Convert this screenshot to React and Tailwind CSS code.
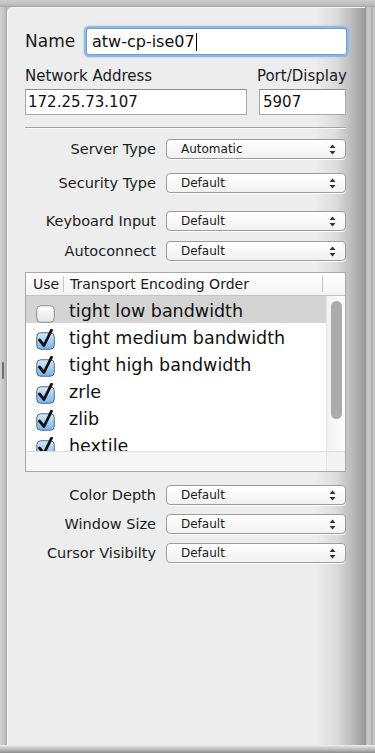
import React from "react";

const FONT = { fontFamily: '"DejaVu Sans", "Noto Sans", sans-serif' };

function Arrows() {
  return (
    <svg width="7" height="11" viewBox="0 0 7 11" className="shrink-0">
      <path d="M3.5 0.5 L6.5 4 L0.5 4 Z" fill="#333" />
      <path d="M3.5 10.5 L6.5 7 L0.5 7 Z" fill="#333" />
    </svg>
  );
}

function Select({ value }) {
  return (
    <div className="flex-1 h-[20px] rounded-[4px] border border-[#9d9d9d] bg-[linear-gradient(#ffffff,#f1f1f1)] shadow-[0_1px_0_#ffffff] flex items-center pl-[14px] pr-[9px]">
      <span className="flex-1 text-[12px] text-[#1a1a1a] leading-none">{value}</span>
      <Arrows />
    </div>
  );
}

function SelectRow({ label, value, mt }) {
  return (
    <div className={`flex items-center h-[20px] ${mt}`}>
      <div className="w-[131px] text-right text-[14.5px] text-[#1c1c1c] leading-none">{label}</div>
      <div className="w-[10px]" />
      <Select value={value} />
    </div>
  );
}

function Checkbox({ checked }) {
  if (!checked) {
    return (
      <svg width="19" height="21" viewBox="0 0 19 21" className="shrink-0">
        <defs>
          <linearGradient id="ug" x1="0" y1="0" x2="0" y2="1">
            <stop offset="0" stopColor="#ffffff" />
            <stop offset="1" stopColor="#e4e4e4" />
          </linearGradient>
        </defs>
        <rect x="0.75" y="3.75" width="17.5" height="16.5" rx="4" fill="url(#ug)" stroke="#8e8e8e" strokeWidth="1" />
      </svg>
    );
  }
  return (
    <svg width="19" height="21" viewBox="0 0 19 21" className="shrink-0">
      <defs>
        <linearGradient id="cg" x1="0" y1="0" x2="0" y2="1">
          <stop offset="0" stopColor="#d9ebfc" />
          <stop offset="0.5" stopColor="#a9cff5" />
          <stop offset="1" stopColor="#73b2ef" />
        </linearGradient>
      </defs>
      <rect x="0.75" y="3.75" width="17.5" height="16.5" rx="4" fill="url(#cg)" stroke="#556a85" strokeWidth="1" />
      <path d="M3.5 11 L8 16.5 L15.5 1.2" fill="none" stroke="#111" strokeWidth="2.8" strokeLinecap="round" strokeLinejoin="round" />
    </svg>
  );
}

const rows = [
  { name: "tight low bandwidth", checked: false, sel: true },
  { name: "tight medium bandwidth", checked: true },
  { name: "tight high bandwidth", checked: true },
  { name: "zrle", checked: true },
  { name: "zlib", checked: true },
  { name: "hextile", checked: true },
];

export default function App() {
  return (
    <div style={FONT} className="relative w-[375px] h-[753px] bg-[#c6c6c6] overflow-hidden flex flex-col">
      <div className="h-[7px] bg-[linear-gradient(#cdcdcd,#bdbdbd_70%,#9e9e9e)]" />
      <div className="flex flex-1">
        <div className="w-[7px] bg-[linear-gradient(to_right,#d2d2d2,#c4c4c4_60%,#a9a9a9)]" />
        <div className="w-[358px] h-[738px] rounded-tl-[6px] border-t border-l border-[#f6f6f6] bg-[linear-gradient(to_right,#ededed_86%,#dcdcdc_92%,#b5b5b5_97%,#9a9a9a)] flex flex-col pl-[17px] pr-[19px]">
          {/* Name */}
          <div className="flex items-center h-[27px] mt-[20px]">
            <div className="w-[61px] text-[17px] text-[#1a1a1a] leading-none">Name</div>
            <div className="flex-1 h-[27px] -mr-px bg-white border border-[#6f9fd6] rounded-[3px] shadow-[0_0_0_2px_#8fb7e4,0_0_3px_2px_#a8c8ec] flex items-center pl-[5px]">
              <span className="text-[16px] text-[#111] leading-none">atw-cp-ise07</span>
              <span className="w-px h-[18px] bg-black ml-px" />
            </div>
          </div>
          {/* Network labels */}
          <div className="flex justify-between items-center h-[20px] mt-[11px] text-[15px] text-[#1c1c1c] leading-none">
            <span>Network Address</span>
            <span className="-mr-px">Port/Display</span>
          </div>
          {/* Inputs */}
          <div className="flex justify-between h-[26px] mt-[3px]">
            <div className="w-[222px] h-[26px] bg-white border border-[#a7a7a7] border-t-[#8d8d8d] flex items-center pl-[2px] text-[15px] text-[#111] leading-none">172.25.73.107</div>
            <div className="w-[87px] h-[26px] bg-white border border-[#a7a7a7] border-t-[#8d8d8d] flex items-center pl-[3px] text-[15px] text-[#111] leading-none">5907</div>
          </div>
          {/* Separator */}
          <div className="mt-[12px] h-px bg-[#a3a3a3]" />
          <div className="h-px bg-[#f8f8f8]" />

          <SelectRow label="Server Type" value="Automatic" mt="mt-[10px]" />
          <SelectRow label="Security Type" value="Default" mt="mt-[14px]" />
          <SelectRow label="Keyboard Input" value="Default" mt="mt-[18px]" />
          <SelectRow label="Autoconnect" value="Default" mt="mt-[10px]" />

          {/* Table */}
          <div className="mt-[11px] h-[200px] border border-[#a8a8a8] bg-white flex flex-col">
            <div className="h-[23px] flex items-center bg-[linear-gradient(#ffffff,#f3f3f3)] border-b border-[#c4c4c4] text-[14px] text-[#1c1c1c] leading-none shrink-0">
              <div className="w-[37px] pl-[7px]">Use</div>
              <div className="w-px h-[16px] bg-[#c8c8c8]" />
              <div className="flex-1 pl-[6px]">Transport Encoding Order</div>
              <div className="w-px h-[16px] bg-[#c8c8c8]" />
              <div className="w-[22px]" />
            </div>
            <div className="h-[155px] flex shrink-0 overflow-hidden">
              <div className="flex-1 flex flex-col overflow-hidden">
                {rows.map((r) => (
                  <div
                    key={r.name}
                    className={`h-[27px] shrink-0 flex items-center pt-[5px] pl-[10px] gap-[14px] ${r.sel ? "h-[26px] bg-[#d4d4d4]" : ""}`}
                  >
                    <Checkbox checked={r.checked} />
                    <span className="text-[17.5px] text-[#111] leading-none">{r.name}</span>
                  </div>
                ))}
              </div>
              <div className="w-[19px] border-l border-[#e4e4e4] bg-[linear-gradient(to_right,#f2f2f2,#fbfbfb)] flex justify-center pt-[5px]">
                <div className="w-[11px] h-[118px] rounded-full bg-[#ababab]" />
              </div>
            </div>
            <div className="flex-1 flex border-t border-[#dedede] bg-[#f6f6f6]">
              <div className="flex-1" />
              <div className="w-[19px] border-l border-[#e4e4e4] bg-[#f2f2f2]" />
            </div>
          </div>

          <SelectRow label="Color Depth" value="Default" mt="mt-[13px]" />
          <SelectRow label="Window Size" value="Default" mt="mt-[9px]" />
          <SelectRow label="Cursor Visibilty" value="Default" mt="mt-[9px]" />
        </div>
        <div className="w-[10px] bg-[linear-gradient(to_right,#8d8d8d,#c9c9c9_20%,#c4c4c4_60%,#9a9a9a_70%,#c8c8c8_80%,#bdbdbd)]" />
      </div>
      <div className="h-[8px] bg-[linear-gradient(#f0f0f0,#d0d0d0_30%,#b8b8b8_60%,#8a8a8a)]" />
      <div className="absolute left-[2px] top-[362px] w-[2px] h-[17px] bg-[#6e6e6e] rounded-full" />
    </div>
  );
}
